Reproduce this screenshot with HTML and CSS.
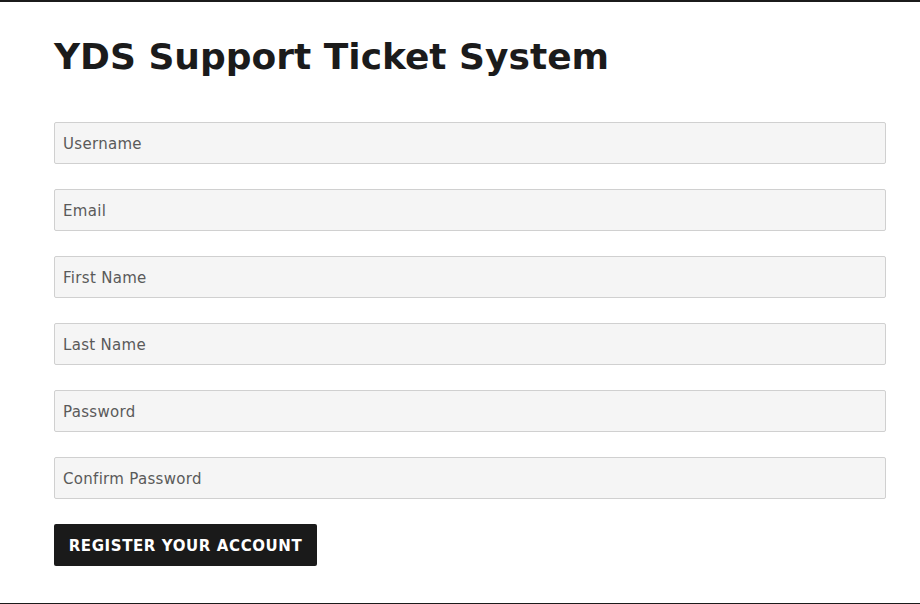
FILE: index.html
```html
<!DOCTYPE html>
<html lang="en">
<head>
<meta charset="utf-8">
<title>YDS Support Ticket System</title>
<link rel="stylesheet" href="styles.css">
</head>
<body>
<div class="page">
  <h1 class="title">YDS Support Ticket System</h1>
  <form class="form">
    <input class="field" type="text" placeholder="Username">
    <input class="field" type="email" placeholder="Email">
    <input class="field" type="text" placeholder="First Name">
    <input class="field" type="text" placeholder="Last Name">
    <input class="field" type="password" placeholder="Password">
    <input class="field" type="password" placeholder="Confirm Password">
    <div class="actions"><button class="btn" type="button">Register your account</button></div>
  </form>
</div>
</body>
</html>
```
FILE: styles.css
```css
html, body {
  margin: 0;
  padding: 0;
  background: #fff;
}
body {
  font-family: "DejaVu Sans", "Open Sans", sans-serif;
  color: #1a1a1a;
}
.page {
  box-sizing: border-box;
  height: 604px;
  border-top: 2px solid #1b1b1b;
  border-bottom: 1px solid #1b1b1b;
  padding: 33px 34px 0 54px;
}
.title {
  margin: 0;
  font-size: 36px;
  line-height: 44px;
  font-weight: bold;
  color: #1b1b1b;
  letter-spacing: 0;
}
.form {
  margin-top: 43px;
  display: flex;
  flex-direction: column;
  gap: 25px;
}
.field {
  box-sizing: border-box;
  width: 832px;
  height: 42px;
  margin: 0;
  padding: 2px 8px 0;
  border: 1px solid #d0d0d0;
  border-radius: 2px;
  background: #f5f5f5;
  font-family: "DejaVu Sans", sans-serif;
  font-size: 15px;
  letter-spacing: 0.3px;
  color: #555;
  outline: none;
}
.field::placeholder {
  color: #5a5a5a;
  opacity: 1;
}
.btn {
  height: 42px;
  width: 263px;
  padding: 2px 0 0;
  border: none;
  border-radius: 2px;
  background: #1a1a1a;
  color: #fff;
  font-family: "DejaVu Sans", sans-serif;
  font-weight: bold;
  font-size: 15px;
  letter-spacing: 0.6px;
  text-transform: uppercase;
}
```
